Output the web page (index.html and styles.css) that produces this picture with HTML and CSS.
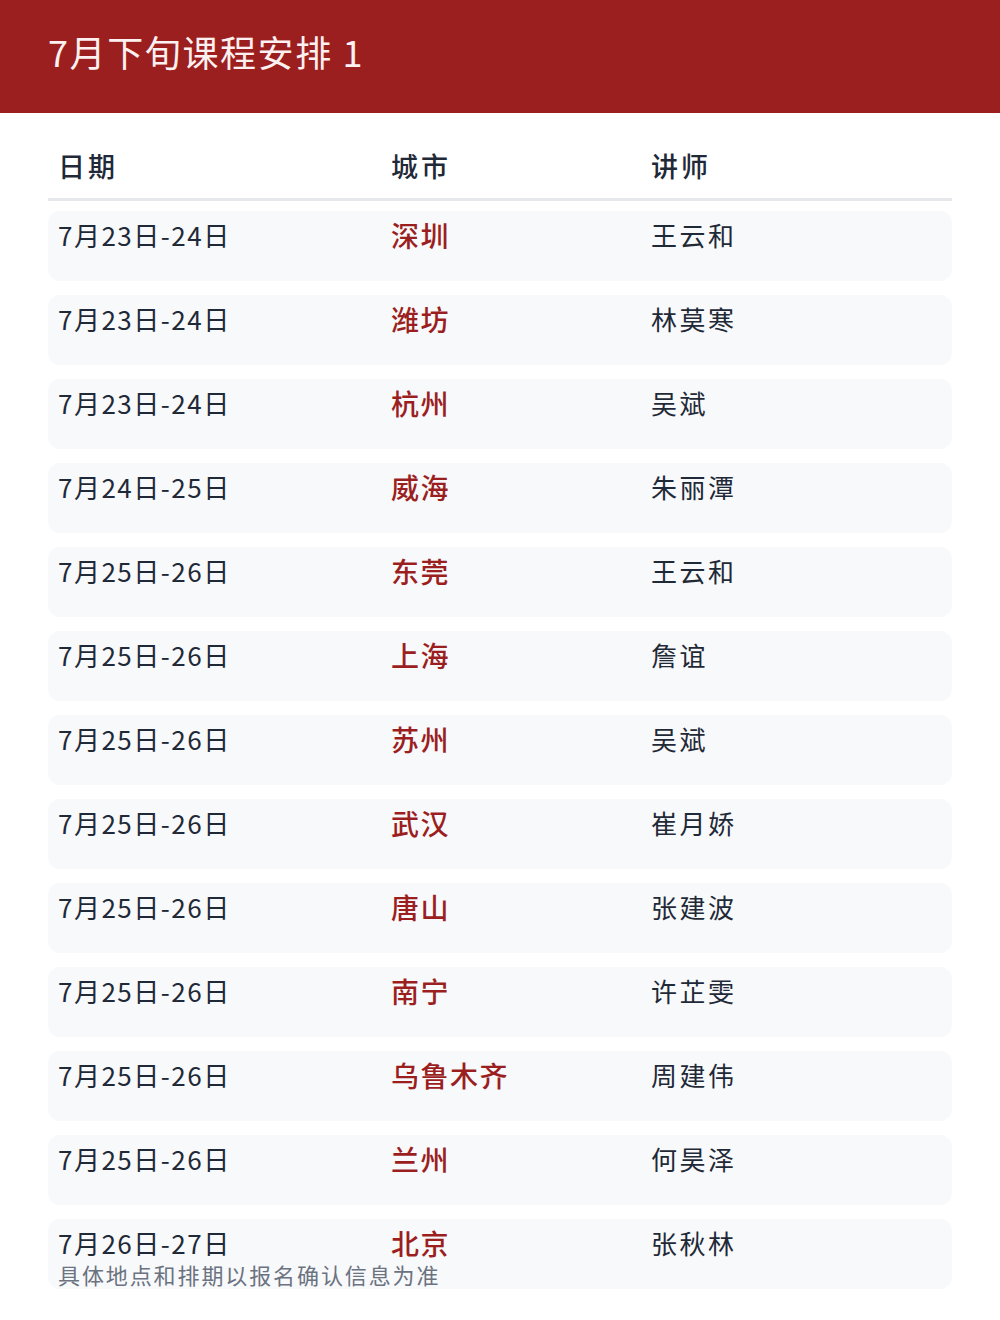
FILE: index.html
```html
<!DOCTYPE html>
<html lang="zh-CN">
<head>
<meta charset="utf-8">
<title>7月下旬课程安排 1</title>
<link rel="stylesheet" href="styles.css">
</head>
<body>
<header class="banner"><h1 class="title">7月下旬课程安排 1</h1></header>
<main class="content">
  <div class="thead">
    <div class="th">日期</div><div class="th">城市</div><div class="th">讲师</div>
  </div>
  <div class="rows">
    <div class="row"><div class="date">7月23日-24日</div><div class="city">深圳</div><div class="teacher">王云和</div></div>
    <div class="row"><div class="date">7月23日-24日</div><div class="city">潍坊</div><div class="teacher">林莫寒</div></div>
    <div class="row"><div class="date">7月23日-24日</div><div class="city">杭州</div><div class="teacher">吴斌</div></div>
    <div class="row"><div class="date">7月24日-25日</div><div class="city">威海</div><div class="teacher">朱丽潭</div></div>
    <div class="row"><div class="date">7月25日-26日</div><div class="city">东莞</div><div class="teacher">王云和</div></div>
    <div class="row"><div class="date">7月25日-26日</div><div class="city">上海</div><div class="teacher">詹谊</div></div>
    <div class="row"><div class="date">7月25日-26日</div><div class="city">苏州</div><div class="teacher">吴斌</div></div>
    <div class="row"><div class="date">7月25日-26日</div><div class="city">武汉</div><div class="teacher">崔月娇</div></div>
    <div class="row"><div class="date">7月25日-26日</div><div class="city">唐山</div><div class="teacher">张建波</div></div>
    <div class="row"><div class="date">7月25日-26日</div><div class="city">南宁</div><div class="teacher">许芷雯</div></div>
    <div class="row"><div class="date">7月25日-26日</div><div class="city">乌鲁木齐</div><div class="teacher">周建伟</div></div>
    <div class="row"><div class="date">7月25日-26日</div><div class="city">兰州</div><div class="teacher">何昊泽</div></div>
    <div class="row"><div class="date">7月26日-27日</div><div class="city">北京</div><div class="teacher">张秋林</div></div>
  </div>
  <p class="note">具体地点和排期以报名确认信息为准</p>
</main>
</body>
</html>
```

FILE: styles.css
```css
* { box-sizing: border-box; }
html, body {
  margin: 0;
  padding: 0;
  background: #ffffff;
  font-family: "Noto Sans CJK SC", "Noto Sans", sans-serif;
  color: #1f2937;
}
.banner {
  background: #9b1f1f;
  height: 113px;
  padding: 0 48px;
  display: flex;
  align-items: center;
}
.title {
  margin: 0;
  color: #fdf0f0;
  font-size: 36px;
  font-weight: 400;
  letter-spacing: 1.6px;
  line-height: 1;
  padding-bottom: 12px;
}
.content {
  padding: 29px 48px 0;
}
.thead, .row {
  display: grid;
  grid-template-columns: 333px 260px 1fr;
}
.thead {
  border-bottom: 3px solid #e5e7eb;
  padding-bottom: 8px;
}
.th {
  font-size: 27px;
  font-weight: 500;
  letter-spacing: 3px;
  line-height: 48px;
  padding-left: 10px;
  color: #1f2937;
}
.rows {
  display: flex;
  flex-direction: column;
  gap: 14px;
  padding-top: 10px;
}
.row {
  background: #f8f9fb;
  border-radius: 12px;
  height: 70px;
  padding-top: 4px;
  font-size: 26px;
  line-height: 40px;
}
.row > div { padding-left: 10px; }
.date { color: #1f2937; letter-spacing: 1.5px; }
.city { color: #9b1f1f; font-weight: 500; font-size: 28px; letter-spacing: 1.5px; }
.teacher { color: #1f2937; letter-spacing: 2.5px; }
.note {
  margin: -30px 0 0;
  padding-left: 10px;
  font-size: 22px;
  line-height: 30px;
  letter-spacing: 1.9px;
  color: #6b7280;
  position: relative;
}
```
